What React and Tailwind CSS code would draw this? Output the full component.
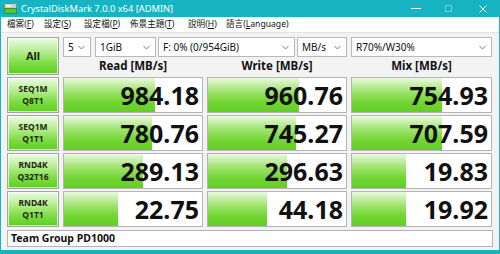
import React from "react";

const rows = [
  { l1: "SEQ1M", l2: "Q8T1", vals: ["984.18", "960.76", "754.93"], bars: [66, 66, 65] },
  { l1: "SEQ1M", l2: "Q1T1", vals: ["780.76", "745.27", "707.59"], bars: [64, 63.5, 65] },
  { l1: "RND4K", l2: "Q32T16", vals: ["289.13", "296.63", "19.83"], bars: [57, 57, 39] },
  { l1: "RND4K", l2: "Q1T1", vals: ["22.75", "44.18", "19.92"], bars: [39, 43, 39] },
];

// label, underlined key, rest, slot width
const menus = [
  ["檔案(", "F", ")", "w-[37px]"],
  ["設定(", "S", ")", "w-[40px]"],
  ["設定檔(", "P", ")", "w-[46px]"],
  ["佈景主題(", "T", ")", "w-[58px]"],
  ["說明(", "H", ")", "w-[38px]"],
  ["語言(", "L", "anguage)", ""],
];

function Chevron() {
  return (
    <svg width="7" height="5" viewBox="0 0 7 5" className="shrink-0">
      <path d="M0.5 1 L3.5 4 L6.5 1" fill="none" stroke="#7a7a7a" strokeWidth="1" />
    </svg>
  );
}

function Combo({ label, className }) {
  return (
    <div
      className={`h-[20px] bg-white border border-[#b9b9b9] flex items-center justify-between pl-[4px] pr-[5px] text-[10px] text-[#111] ${className}`}
    >
      <span>{label}</span>
      <Chevron />
    </div>
  );
}

function LabelButton({ children }) {
  return (
    <div className="border border-[#a3a3a3] bg-[linear-gradient(to_bottom,#eefbe6_0%,#b9ee95_35%,#7fdc45_70%,#5ccf1f_100%)] shadow-[inset_0_0_0_1px_#ffffffaa] flex flex-col items-center justify-center text-[#1c2a12] font-bold">
      {children}
    </div>
  );
}

function Cell({ value, bar }) {
  return (
    <div className="relative bg-white border border-[#b4b4b4] h-full flex items-center justify-end pr-[3px] overflow-hidden">
      <div
        className="absolute left-0 top-0 bottom-0 bg-[linear-gradient(to_bottom,#eaf9e0_0%,#a7e67a_35%,#72d634_70%,#62cf24_100%)]"
        style={{ width: `${bar}%` }}
      />
      <span className="relative text-[25px] font-bold leading-none text-[#111]">{value}</span>
    </div>
  );
}

export default function App() {
  return (
    <div
      className="w-[500px] h-[254px] bg-[#17b3c3] flex flex-col px-[1px] pb-[4px] overflow-hidden"
      style={{ fontFamily: '"Noto Sans", "Noto Sans CJK TC", sans-serif' }}
    >
      {/* title bar */}
      <div className="h-[17px] flex items-center text-white shrink-0">
        <svg width="13" height="11" viewBox="0 0 13 11" className="ml-[3px]">
          <rect x="0.5" y="0.5" width="12" height="5" rx="1" fill="#c9cfd2" stroke="#7d8b90" />
          <rect x="0.5" y="5.5" width="12" height="5" fill="#55c532" stroke="#3f8f2a" />
          <rect x="2" y="2" width="5" height="1.5" fill="#ffffff" />
        </svg>
        <span className="ml-[4px] text-[9.3px] leading-none">CrystalDiskMark 7.0.0 x64 [ADMIN]</span>
        <div className="ml-auto flex items-center h-full">
          <div className="w-[10px] h-[1px] bg-white mr-[24px]" />
          <div className="w-[7px] h-[7px] border border-white/40 mr-[27px]" />
          <svg width="8" height="8" viewBox="0 0 8 8" className="mr-[12px]">
            <path d="M0.5 0.5 L7.5 7.5 M7.5 0.5 L0.5 7.5" stroke="#fff" strokeWidth="1" />
          </svg>
        </div>
      </div>

      {/* menu */}
      <div className="h-[16px] bg-white flex items-center pl-[6px] text-[8.6px] text-[#111] shrink-0 border-b border-[#e3e3e3]">
        {menus.map((m, i) => (
          <span key={i} className={`leading-none whitespace-nowrap ${m[3]}`}>
            {m[0]}
            <span className="underline">{m[1]}</span>
            {m[2]}
          </span>
        ))}
      </div>

      {/* body */}
      <div className="flex-1 bg-[#f3f3f3] pl-[6px] pt-[4px] pr-[6px] flex flex-col">
        <div className="grid grid-cols-[52px_140px_140px_141px] gap-x-[4px] gap-y-[2px] grid-rows-[38px_36px_36px_36px_36px]">
          <LabelButton>
            <span className="text-[11px]">All</span>
          </LabelButton>
          <div className="col-span-3 flex flex-col">
            <div className="flex">
              <Combo label="5" className="w-[28px]" />
              <Combo label="1GiB" className="w-[61px] ml-[4px]" />
              <Combo label="F: 0% (0/954GiB)" className="w-[137px] ml-[2px]" />
              <Combo label="MB/s" className="w-[50px] ml-[2px]" />
              <Combo label="R70%/W30%" className="w-[141px] ml-[4px]" />
            </div>
            <div className="flex-1 grid grid-cols-[140px_140px_141px] gap-x-[4px] items-center text-[11.5px] font-bold text-[#111]">
              <div className="text-center">Read [MB/s]</div>
              <div className="text-center">Write [MB/s]</div>
              <div className="text-center">Mix [MB/s]</div>
            </div>
          </div>

          {rows.map((r, i) => (
            <React.Fragment key={i}>
              <LabelButton>
                <span className="text-[8.5px] leading-[12px]">{r.l1}</span>
                <span className="text-[8.5px] leading-[12px]">{r.l2}</span>
              </LabelButton>
              {r.vals.map((v, j) => (
                <Cell key={j} value={v} bar={r.bars[j]} />
              ))}
            </React.Fragment>
          ))}
        </div>

        <div className="mt-[3px] h-[17px] bg-white border border-[#b4b4b4] flex items-center pl-[3px] text-[10.5px] font-bold text-[#111]">
          Team Group PD1000
        </div>
      </div>
    </div>
  );
}
